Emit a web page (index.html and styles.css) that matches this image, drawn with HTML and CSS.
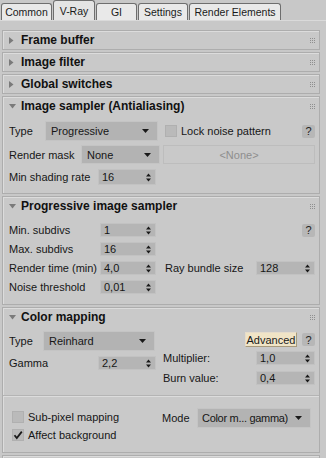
FILE: index.html
```html
<!DOCTYPE html>
<html>
<head>
<meta charset="utf-8">
<link rel="stylesheet" href="styles.css">
</head>
<body>
<div class="tabs">
  <div class="tab w-common">Common</div>
  <div class="tab active w-vray">V-Ray</div>
  <div class="tab w-gi">GI</div>
  <div class="tab w-settings">Settings</div>
  <div class="tab w-elements">Render Elements</div>
</div>

<div class="rollouts">
  <div class="rollout">
    <div class="hdr"><span class="tri"><svg width="5" height="7" viewBox="0 0 5 7"><path d="M0 0L4.5 3.5L0 7Z" fill="#7a7a7a"/></svg></span><span class="title">Frame buffer</span><span class="grip"><svg width="5" height="5" viewBox="0 0 5 5" fill="#8f8f8f"><rect x="0" y="0" width="1" height="1"/><rect x="2" y="0" width="1" height="1"/><rect x="4" y="0" width="1" height="1"/><rect x="0" y="2" width="1" height="1"/><rect x="2" y="2" width="1" height="1"/><rect x="4" y="2" width="1" height="1"/><rect x="0" y="4" width="1" height="1"/><rect x="2" y="4" width="1" height="1"/><rect x="4" y="4" width="1" height="1"/></svg></span></div>
  </div>
  <div class="rollout">
    <div class="hdr"><span class="tri"><svg width="5" height="7" viewBox="0 0 5 7"><path d="M0 0L4.5 3.5L0 7Z" fill="#7a7a7a"/></svg></span><span class="title">Image filter</span><span class="grip"><svg width="5" height="5" viewBox="0 0 5 5" fill="#8f8f8f"><rect x="0" y="0" width="1" height="1"/><rect x="2" y="0" width="1" height="1"/><rect x="4" y="0" width="1" height="1"/><rect x="0" y="2" width="1" height="1"/><rect x="2" y="2" width="1" height="1"/><rect x="4" y="2" width="1" height="1"/><rect x="0" y="4" width="1" height="1"/><rect x="2" y="4" width="1" height="1"/><rect x="4" y="4" width="1" height="1"/></svg></span></div>
  </div>
  <div class="rollout">
    <div class="hdr"><span class="tri"><svg width="5" height="7" viewBox="0 0 5 7"><path d="M0 0L4.5 3.5L0 7Z" fill="#7a7a7a"/></svg></span><span class="title">Global switches</span><span class="grip"><svg width="5" height="5" viewBox="0 0 5 5" fill="#8f8f8f"><rect x="0" y="0" width="1" height="1"/><rect x="2" y="0" width="1" height="1"/><rect x="4" y="0" width="1" height="1"/><rect x="0" y="2" width="1" height="1"/><rect x="2" y="2" width="1" height="1"/><rect x="4" y="2" width="1" height="1"/><rect x="0" y="4" width="1" height="1"/><rect x="2" y="4" width="1" height="1"/><rect x="4" y="4" width="1" height="1"/></svg></span></div>
  </div>

  <div class="rollout">
    <div class="hdr"><span class="tri"><svg width="7" height="5" viewBox="0 0 7 5"><path d="M0 0L7 0L3.5 4.5Z" fill="#7a7a7a"/></svg></span><span class="title">Image sampler (Antialiasing)</span><span class="grip"><svg width="5" height="5" viewBox="0 0 5 5" fill="#8f8f8f"><rect x="0" y="0" width="1" height="1"/><rect x="2" y="0" width="1" height="1"/><rect x="4" y="0" width="1" height="1"/><rect x="0" y="2" width="1" height="1"/><rect x="2" y="2" width="1" height="1"/><rect x="4" y="2" width="1" height="1"/><rect x="0" y="4" width="1" height="1"/><rect x="2" y="4" width="1" height="1"/><rect x="4" y="4" width="1" height="1"/></svg></span></div>
    <div class="body is-body">
      <div class="row h20">
        <span class="lbl lw36">Type</span>
        <div class="dd dw113"><span>Progressive</span><svg class="dd-arrow" width="7" height="4" viewBox="0 0 7 4"><path d="M0 0H7L3.5 4Z" fill="#1a1a1a"/></svg></div>
        <span class="cb ml7"></span>
        <span class="cb-lbl">Lock noise pattern</span>
        <span class="help">?</span>
      </div>
      <div class="row h19 mt4">
        <span class="lbl lw72">Render mask</span>
        <div class="dd dw79"><span>None</span><svg class="dd-arrow" width="7" height="4" viewBox="0 0 7 4"><path d="M0 0H7L3.5 4Z" fill="#1a1a1a"/></svg></div>
        <div class="nonebtn">&lt;None&gt;</div>
      </div>
      <div class="row h16 mt5">
        <span class="lbl lw89">Min shading rate</span>
        <div class="sp sw58"><span>16</span><svg class="sp-arrow" width="5" height="9" viewBox="0 0 5 9"><path d="M0 3.6L2.5 0.4L5 3.6Z M0 5.4H5L2.5 8.6Z" fill="#1a1a1a"/></svg></div>
      </div>
    </div>
  </div>

  <div class="rollout">
    <div class="hdr"><span class="tri"><svg width="7" height="5" viewBox="0 0 7 5"><path d="M0 0L7 0L3.5 4.5Z" fill="#7a7a7a"/></svg></span><span class="title">Progressive image sampler</span><span class="grip"><svg width="5" height="5" viewBox="0 0 5 5" fill="#8f8f8f"><rect x="0" y="0" width="1" height="1"/><rect x="2" y="0" width="1" height="1"/><rect x="4" y="0" width="1" height="1"/><rect x="0" y="2" width="1" height="1"/><rect x="2" y="2" width="1" height="1"/><rect x="4" y="2" width="1" height="1"/><rect x="0" y="4" width="1" height="1"/><rect x="2" y="4" width="1" height="1"/><rect x="4" y="4" width="1" height="1"/></svg></span></div>
    <div class="body pis-body">
      <div class="row h14">
        <span class="lbl lw91">Min. subdivs</span>
        <div class="sp sw56"><span>1</span><svg class="sp-arrow" width="5" height="9" viewBox="0 0 5 9"><path d="M0 3.6L2.5 0.4L5 3.6Z M0 5.4H5L2.5 8.6Z" fill="#1a1a1a"/></svg></div>
        <span class="help">?</span>
      </div>
      <div class="row h14 mt5">
        <span class="lbl lw91">Max. subdivs</span>
        <div class="sp sw56"><span>16</span><svg class="sp-arrow" width="5" height="9" viewBox="0 0 5 9"><path d="M0 3.6L2.5 0.4L5 3.6Z M0 5.4H5L2.5 8.6Z" fill="#1a1a1a"/></svg></div>
      </div>
      <div class="row h14 mt5">
        <span class="lbl lw91">Render time (min)</span>
        <div class="sp sw56"><span>4,0</span><svg class="sp-arrow" width="5" height="9" viewBox="0 0 5 9"><path d="M0 3.6L2.5 0.4L5 3.6Z M0 5.4H5L2.5 8.6Z" fill="#1a1a1a"/></svg></div>
        <span class="lbl lw91 ml9">Ray bundle size</span>
        <div class="sp sw59"><span>128</span><svg class="sp-arrow" width="5" height="9" viewBox="0 0 5 9"><path d="M0 3.6L2.5 0.4L5 3.6Z M0 5.4H5L2.5 8.6Z" fill="#1a1a1a"/></svg></div>
      </div>
      <div class="row h14 mt5">
        <span class="lbl lw91">Noise threshold</span>
        <div class="sp sw56"><span>0,01</span><svg class="sp-arrow" width="5" height="9" viewBox="0 0 5 9"><path d="M0 3.6L2.5 0.4L5 3.6Z M0 5.4H5L2.5 8.6Z" fill="#1a1a1a"/></svg></div>
      </div>
    </div>
  </div>

  <div class="rollout">
    <div class="hdr"><span class="tri"><svg width="7" height="5" viewBox="0 0 7 5"><path d="M0 0L7 0L3.5 4.5Z" fill="#7a7a7a"/></svg></span><span class="title">Color mapping</span><span class="grip"><svg width="5" height="5" viewBox="0 0 5 5" fill="#8f8f8f"><rect x="0" y="0" width="1" height="1"/><rect x="2" y="0" width="1" height="1"/><rect x="4" y="0" width="1" height="1"/><rect x="0" y="2" width="1" height="1"/><rect x="2" y="2" width="1" height="1"/><rect x="4" y="2" width="1" height="1"/><rect x="0" y="4" width="1" height="1"/><rect x="2" y="4" width="1" height="1"/><rect x="4" y="4" width="1" height="1"/></svg></span></div>
    <div class="body cm-body">
      <div class="cm-cols">
        <div class="cm-left">
          <div class="row h20">
            <span class="lbl lw34">Type</span>
            <div class="dd dw112"><span>Reinhard</span><svg class="dd-arrow" width="7" height="4" viewBox="0 0 7 4"><path d="M0 0H7L3.5 4Z" fill="#1a1a1a"/></svg></div>
          </div>
          <div class="row h14 mt5">
            <span class="lbl lw89">Gamma</span>
            <div class="sp sw58"><span>2,2</span><svg class="sp-arrow" width="5" height="9" viewBox="0 0 5 9"><path d="M0 3.6L2.5 0.4L5 3.6Z M0 5.4H5L2.5 8.6Z" fill="#1a1a1a"/></svg></div>
          </div>
        </div>
        <div class="cm-right">
          <div class="row h15 mt1 end">
            <span class="adv">Advanced</span>
            <span class="help ml5">?</span>
          </div>
          <div class="row h14 mt4">
            <span class="lbl grow">Multiplier:</span>
            <div class="sp sw59"><span>1,0</span><svg class="sp-arrow" width="5" height="9" viewBox="0 0 5 9"><path d="M0 3.6L2.5 0.4L5 3.6Z M0 5.4H5L2.5 8.6Z" fill="#1a1a1a"/></svg></div>
          </div>
          <div class="row h14 mt6">
            <span class="lbl grow">Burn value:</span>
            <div class="sp sw59"><span>0,4</span><svg class="sp-arrow" width="5" height="9" viewBox="0 0 5 9"><path d="M0 3.6L2.5 0.4L5 3.6Z M0 5.4H5L2.5 8.6Z" fill="#1a1a1a"/></svg></div>
          </div>
        </div>
      </div>
      <div class="divider"></div>
      <div class="cm-bottom">
        <div class="cm-checks">
          <div class="row h18">
            <span class="cb"></span>
            <span class="cb-lbl">Sub-pixel mapping</span>
          </div>
          <div class="row h18">
            <span class="cb"><svg width="10" height="10" viewBox="0 0 10 10"><path d="M1.5 5.2L3.8 8L8.8 1.6" fill="none" stroke="#1a1a1a" stroke-width="1.8"/></svg></span>
            <span class="cb-lbl">Affect background</span>
          </div>
        </div>
        <div class="row h20">
          <span class="lbl lw35">Mode</span>
          <div class="dd dw114 tight"><span>Color m... gamma)</span><svg class="dd-arrow" width="7" height="4" viewBox="0 0 7 4"><path d="M0 0H7L3.5 4Z" fill="#1a1a1a"/></svg></div>
        </div>
      </div>
    </div>
  </div>
  <div class="rollout stub"></div>
</div>
</body>
</html>
```

FILE: styles.css
```css
* { box-sizing: border-box; }
html, body { margin: 0; padding: 0; }
body {
  width: 326px;
  height: 458px;
  overflow: hidden;
  background: #c8c8c8;
  font-family: "Liberation Sans", Arial, sans-serif;
  font-size: 11px;
  color: #161616;
}

/* tabs */
.tabs {
  display: flex;
  align-items: flex-end;
  height: 21px;
  padding-left: 1px;
  gap: 1px;
  border-bottom: 1px solid #dadada;
}
.tab {
  height: 17px;
  border: 1px solid #6e6e6e;
  border-bottom: none;
  border-radius: 3px 3px 0 0;
  background: #e9e9e9;
  font-size: 10.5px;
  display: flex;
  align-items: center;
  justify-content: center;
  color: #1a1a1a;
}
.tab.active { height: 20px; background: #e4e4e4; }
.w-common { width: 51px; }
.w-vray { width: 42px; }
.w-gi { width: 41px; }
.w-settings { width: 50px; }
.w-elements { width: 92px; }

/* rollouts */
.rollouts { padding: 9px 6px 0 2px; }
.rollout {
  border: 1px solid #adadad;
  box-shadow: inset 1px 1px 0 #dcdcdc;
  background: #c9c9c9;
  margin-bottom: 2px;
}
.rollout.stub { height: 10px; }
.hdr {
  height: 18px;
  display: flex;
  align-items: center;
  padding: 0 4px 0 6px;
  font-weight: bold;
  font-size: 12px;
  color: #111;
}
.tri { width: 12px; display: flex; align-items: center; }
.tri svg { display: block; }
.grip { margin-left: auto; display: flex; }

.body { padding: 6px 4px 8px 6px; }
.pis-body { padding: 8px 4px 10px 6px; }
.cm-body { padding: 5px 4px 8px 6px; }

.row { display: flex; align-items: center; }
.h14 { height: 14px; }
.h15 { height: 15px; }
.h16 { height: 16px; }
.h18 { height: 18px; }
.h19 { height: 19px; }
.h20 { height: 20px; }
.mt1 { margin-top: 1px; }
.mt4 { margin-top: 4px; }
.mt5 { margin-top: 5px; }
.mt6 { margin-top: 6px; }
.ml5 { margin-left: 5px; }
.ml7 { margin-left: 7px; }
.ml9 { margin-left: 9px; }
.end { justify-content: flex-end; }
.grow { flex: 1; }

.lbl { flex-shrink: 0; white-space: nowrap; }
.lw34 { width: 34px; }
.lw35 { width: 35px; }
.lw36 { width: 36px; }
.lw72 { width: 72px; }
.lw89 { width: 89px; }
.lw91 { width: 91px; }

/* dropdown */
.dd {
  height: 100%;
  display: flex;
  align-items: center;
  padding: 0 8px 0 5px;
  background: #b3b3b3;
  border: 1px solid #c4c4c4;
  flex-shrink: 0;
}
.dd span { flex: 1; white-space: nowrap; overflow: hidden; }
.dd.tight { padding-left: 4px; }
.dd.tight span { letter-spacing: -0.3px; }
.dd-arrow { display: block; flex-shrink: 0; }
.dw79 { width: 79px; }
.dw112 { width: 112px; }
.dw113 { width: 113px; }
.dw114 { width: 114px; }

/* spinner */
.sp {
  height: 100%;
  display: flex;
  align-items: center;
  padding: 0 4px 0 3px;
  background: #b5b5b5;
  border: 1px solid #c2c2c2;
  flex-shrink: 0;
}
.sp span { flex: 1; }
.sp-arrow { display: block; }
.sw56 { width: 56px; }
.sw58 { width: 58px; }
.sw59 { width: 59px; }

/* checkbox */
.cb {
  width: 12px;
  height: 12px;
  background: #bababa;
  border: 1px solid #b0b0b0;
  flex-shrink: 0;
  display: flex;
  align-items: center;
  justify-content: center;
}
.cb svg { display: block; }
.cb-lbl { margin-left: 4px; white-space: nowrap; }

.help {
  margin-left: auto;
  width: 13px;
  height: 13px;
  border-radius: 2px;
  background: #b7b7b7;
  display: flex;
  align-items: center;
  justify-content: center;
  font-size: 11px;
  color: #222;
}
.end .help { margin-left: 5px; }

.nonebtn {
  margin-left: 3px;
  flex: 1;
  height: 100%;
  display: flex;
  align-items: center;
  justify-content: center;
  background: #c9c9c9;
  border: 1px solid #bdbdbd;
  color: #8e8e8e;
}

.adv {
  width: 52px;
  height: 15px;
  display: flex;
  align-items: center;
  justify-content: center;
  background: #f0e4c6;
  border: 1px solid #a89a7c;
  border-top-color: #e6dccb;
  border-left-color: #e6dccb;
  color: #1a1a1a;
}

/* color mapping */
.cm-cols { display: flex; gap: 7px; }
.cm-left { width: 147px; }
.cm-right { flex: 1; }
.divider {
  margin: 10px -4px 0 -6px;
  border-top: 1px solid #b4b4b4;
  border-bottom: 1px solid #dcdcdc;
}
.cm-bottom { display: flex; margin-top: 11px; align-items: flex-start; }
.cm-checks { width: 153px; padding-left: 3px; }
```
